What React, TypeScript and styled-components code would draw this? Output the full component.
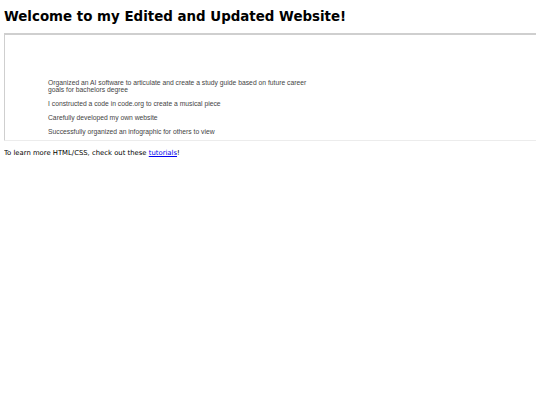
import React from "react";
import styled, { createGlobalStyle } from "styled-components";

const Global = createGlobalStyle`
  html, body { background: #ffffff; }
  body {
    margin: 4px;
    font-family: "DejaVu Sans", Verdana, sans-serif;
    font-size: 6.8px;
    color: #000;
  }
`;

const Title = styled.h1`
  font-family: "DejaVu Sans", Verdana, sans-serif;
  font-weight: bold;
  font-size: 13.4px;
  line-height: 16px;
  margin: 5px 0 8px 0;
  color: #000;
`;

const Frame = styled.div`
  box-sizing: border-box;
  width: 536px;
  margin-left: -1px;
  height: 108px;
  border-style: solid;
  border-width: 2px 1px 1px 2px;
  border-color: #cfcfcf #f0f0f0 #ececec #cfcfcf;
  background: #fff;
  padding: 44px 0 0 43px;
`;

const List = styled.ul`
  list-style: none;
  margin: 0;
  padding: 0;
  width: 266px;
  font-family: "Liberation Sans", Arial, sans-serif;
  font-size: 6.75px;
  line-height: 7px;
  color: #444;
`;

const Item = styled.li`
  margin-bottom: 7px;
`;

const Note = styled.p`
  margin: 8px 0 0 0;
  font-family: "DejaVu Sans", Verdana, sans-serif;
  font-size: 6.85px;
  line-height: 8px;
  color: #000;
`;

const Link = styled.a`
  color: #0000ee;
  text-decoration: underline;
`;

export default function App() {
  return (
    <>
      <Global />
      <Title>Welcome to my Edited and Updated Website!</Title>
      <Frame>
        <List>
          <Item>
            Organized an AI software to articulate and create a study guide based on future career goals for bachelors degree
          </Item>
          <Item>I constructed a code in code.org to create a musical piece</Item>
          <Item>Carefully developed my own website</Item>
          <Item>Successfully organized an infographic for others to view</Item>
        </List>
      </Frame>
      <Note>
        To learn more HTML/CSS, check out these <Link href="#">tutorials</Link>!
      </Note>
    </>
  );
}
